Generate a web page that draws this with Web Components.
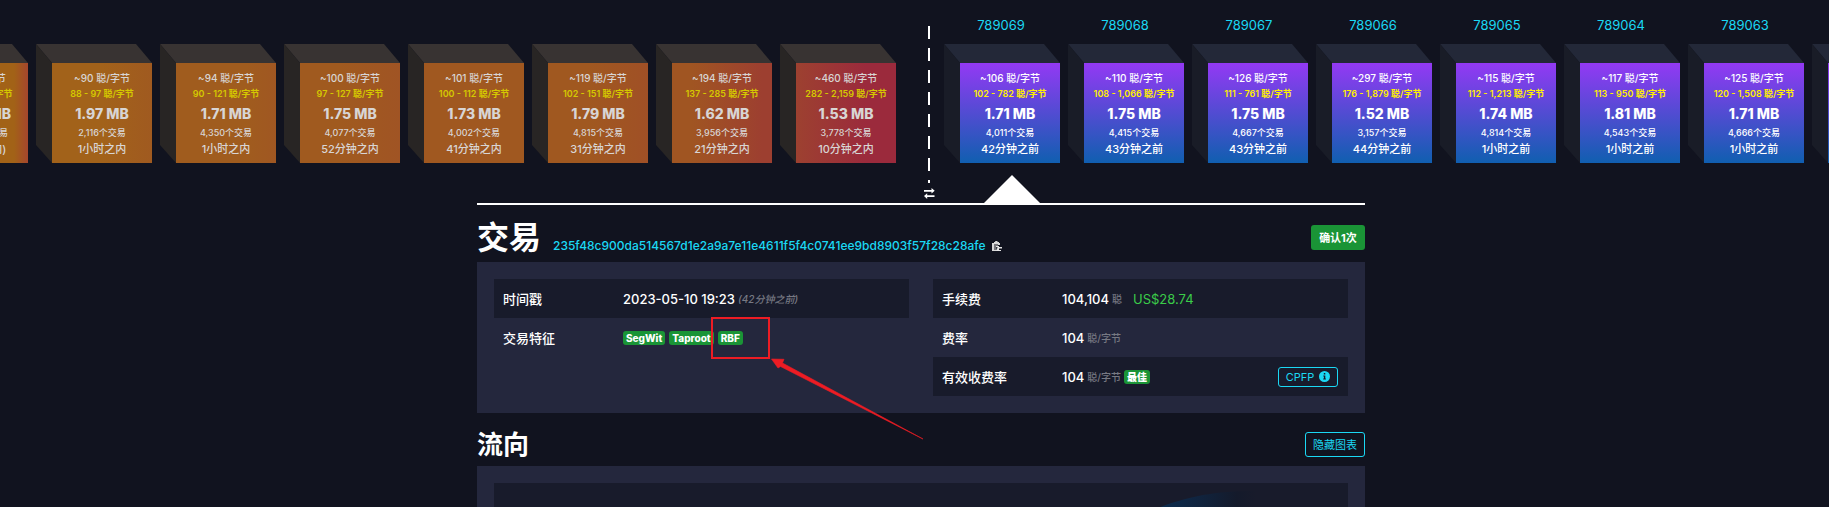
<!DOCTYPE html>
<html lang="zh-CN">
<head>
<meta charset="utf-8">
<title>交易 - mempool</title>
<style>
  html, body { margin: 0; background: #11131f; }
  body { color: #fff; font: 400 13px/20px Inter, "Noto Sans CJK SC", sans-serif; }
</style>
</head>
<body>
<mempool-page></mempool-page>

<template id="t-page">
  <style>
    :host { display: block; height: 100vh; overflow: hidden; }
    .strip { display: grid; grid-template-columns: minmax(0, 1fr) 48px minmax(0, 1fr); padding: 16px 0 0 11px; height: 203px; box-sizing: border-box; }
    .pending, .mined { display: flex; gap: 8px; }
    .pending { justify-content: flex-end; }
    main { padding-left: 13px; }
    .container { max-width: 888px; margin: 0 auto; border-top: 2px solid #fff; }
    header { display: flex; align-items: center; box-sizing: border-box; }
    header.tx { height: 57px; padding-top: 8px; }
    header.flow { height: 53px; padding-top: 10px; }
    h1, h2 { margin: 0; font-weight: 700; }
    h1 { font-size: 32px; line-height: 40px; }
    h2 { font-size: 26px; line-height: 32px; flex: 1; }
    .id { flex: 1; display: flex; align-items: center; gap: 6px; padding: 16px 0 0 12px; font-size: 12px; font-weight: 500; }
    a { color: #1bd8f4; text-decoration: none; }
    .copy { border: 0; padding: 0; background: none; display: flex; }
    .confirmed, .hide { box-sizing: border-box; height: 25px; border-radius: 3px; font: 700 11px/20px Inter, "Noto Sans CJK SC", sans-serif; padding: 0; }
    .confirmed { width: 54px; border: 0; background: #1a9436; color: #fff; }
    .hide { width: 60px; border: 1px solid #1bd8f4; background: none; color: #1bd8f4; font-weight: 400; }
    .columns { display: grid; grid-template-columns: 1fr 1fr; gap: 24px; align-items: start; }
    .chart { display: flex; justify-content: flex-end; background: #181b2b; min-height: 200px; padding: 8px 92px 0 0; box-sizing: border-box; }
    em, small { font-size: 10px; color: #777983; }
    .fiat { color: #3bcc49; margin-left: 8px; font-weight: 400; }
    .push { margin-left: auto; }
    .cpfp { display: flex; align-items: center; justify-content: center; gap: 5px; width: 60px; height: 20px; box-sizing: border-box; border: 1px solid #1bd8f4; border-radius: 3px; background: none; color: #1bd8f4; padding: 0; font: 400 11px/16px Inter, sans-serif; }
  </style>
  <div class="strip">
    <div class="pending"></div>
    <chain-divider></chain-divider>
    <div class="mined"></div>
  </div>
  <main>
    <div class="container">
      <header class="tx">
        <h1>交易</h1>
        <div class="id"><a href="#tx">235f48c900da514567d1e2a9a7e11e4611f5f4c0741ee9bd8903f57f28c28afe</a>
          <button class="copy" aria-label="复制"><svg width="10" height="10" viewBox="0 0 10 10"><path d="M0 2h2V1h1.200V0h2.300v1H7v1h1v2H6V3H2v6h3v1H0z" fill="#d9d9d9"/><path d="M2 3h4v2H4v4H2z" fill="#77777c"/><path d="M4 5h3v1h3v1.500H7V9h2v1H4.500V7.800L6 6.800 4 6z" fill="#e6e6e6"/></svg></button></div>
        <button class="confirmed">确认1次</button>
      </header>
      <info-card>
        <div class="columns">
          <data-rows>
            <data-row shade label="时间戳"><span>2023-05-10 19:23</span><em>(42分钟之前)</em></data-row>
            <data-row label="交易特征"><tag-badge>SegWit</tag-badge><tag-badge>Taproot</tag-badge><tag-badge>RBF</tag-badge></data-row>
          </data-rows>
          <data-rows>
            <data-row shade label="手续费"><span>104,104</span><small>聪</small><span class="fiat">US$28.74</span></data-row>
            <data-row label="费率"><span>104</span><small>聪/字节</small></data-row>
            <data-row shade label="有效收费率"><span>104</span><small>聪/字节</small><tag-badge>最佳</tag-badge><button class="cpfp push">CPFP <svg width="11" height="11" viewBox="0 0 11 11"><circle cx="5.500" cy="5.500" r="5.500" fill="#1bd8f4"/><path d="M4.800 2h1.500v1.400H4.800zM4.300 4.400h2v3.200h.6v1H4.200v-1h.7V5.400h-.6z" fill="#181b2b"/></svg></button></data-row>
          </data-rows>
        </div>
        <callout-arrow></callout-arrow>
      </info-card>
      <header class="flow">
        <h2>流向</h2>
        <button class="hide">隐藏图表</button>
      </header>
      <info-card>
        <div class="chart">
          <svg width="98" height="60" viewBox="0 0 98 60"><defs><linearGradient id="flow"><stop offset="0" stop-color="#0b2c4f"/><stop offset=".4" stop-color="#10243f"/><stop offset=".8" stop-color="#141a2b"/><stop offset="1" stop-color="#181b2b"/></linearGradient></defs><path d="M0 17C28 6 55 0 98 0V30C60 30 20 40 0 60z" fill="url(#flow)"/></svg>
        </div>
      </info-card>
    </div>
  </main>
</template>

<template id="t-block">
  <style>
    :host { display: block; flex: none; width: 116px; text-align: center; white-space: nowrap; }
    .height { display: block; height: 20px; line-height: 18px; margin-bottom: 8px; padding-right: 2px; font-size: 13px; color: #1bd8f4; text-decoration: none; }
    .cube { display: grid; grid-template: 19px 100px / 16px 100px; }
    .top { grid-area: 1 / 1 / 2 / 3; background: var(--top, #232838); clip-path: polygon(0 0, 100px 0, 100% 100%, 16px 100%); }
    .side { grid-area: 1 / 1 / 3 / 2; background: var(--side, #191c27); clip-path: polygon(0 0, 100% 19px, 100% 100%, 0 101px); }
    .face { display: flex; flex-direction: column; align-items: center; grid-area: 2 / 2; background: var(--face, linear-gradient(#9339f4, #105fb0)); color: var(--ink, #fff); padding-top: 7px; box-sizing: border-box; font-weight: 500; }
    .face div { line-height: 16px; }
    .face .fee { font-size: 10px; }
    .face .range { font-size: 9px; font-weight: 600; color: var(--range, #fff000); }
    .face .size { font-size: 14px; font-weight: 800; line-height: 24px; }
    .face .txs { font-size: 9px; line-height: 14px; }
    .face .time { font-size: 11px; line-height: 18px; }
    .marker { display: none; width: 56px; height: 28px; margin: 12px 0 0 40px; background: #fff; clip-path: polygon(50% 0, 100% 100%, 0 100%); }
    :host([current]) .marker { display: block; }
  </style>
  <a class="height" href="#block"></a>
  <div class="cube">
    <div class="top"></div><div class="side"></div>
    <div class="face"><div class="fee"></div><div class="range"></div><div class="size"></div><div class="txs"></div><div class="time"></div></div>
  </div>
  <div class="marker"></div>
</template>

<template id="t-divider">
  <style>
    :host { display: flex; flex-direction: column; align-items: center; padding: 10px 0 0 18px; }
    .line { width: 2px; height: 157px; background: repeating-linear-gradient(#fff 0 13px, transparent 13px 22px); }
    button { border: 0; padding: 0; margin-top: 5px; background: none; display: flex; }
  </style>
  <div class="line"></div>
  <button aria-label="切换方向"><svg width="11" height="11" viewBox="0 0 11 11"><path d="M0 2h7.500V0l3.200 2.800-3.200 2.800V3.800H0zM10.500 7.200H3.200V5.200L0 8.100l3.200 2.800V9h7.300z" fill="#fff"/></svg></button>
</template>

<script>
const base = (id, extra) => class extends HTMLElement {
  connectedCallback() {
    if (this.shadowRoot) return;
    this.attachShadow({ mode: 'open' }).append(document.getElementById(id).content.cloneNode(true));
    if (extra) extra(this, this.shadowRoot);
  }
};
const styled = html => class extends HTMLElement {
  connectedCallback() {
    if (this.shadowRoot) return;
    this.attachShadow({ mode: 'open' }).innerHTML = typeof html === 'function' ? html(this) : html;
  }
};

customElements.define('chain-divider', base('t-divider'));

customElements.define('chain-block', base('t-block', (host, root) => {
  const d = host.data;
  for (const k of ['fee', 'range', 'size', 'txs', 'time']) root.querySelector('.' + k).textContent = d[k];
  const link = root.querySelector('.height');
  if (d.height) link.textContent = d.height;
  else link.replaceWith(Object.assign(document.createElement('div'), { className: 'height' }));
}));

customElements.define('info-card', styled(`<style>
  :host { display: block; position: relative; background: #24273d; padding: 17px; }
</style><slot></slot>`));

customElements.define('data-rows', styled('<style>:host { display: block; }</style><slot></slot>'));

customElements.define('data-row', styled(el => `<style>
  :host { display: grid; grid-template-columns: 120px 1fr; align-items: center; height: 39px; padding: 0 10px 0 9px; font-weight: 500; }
  :host([shade]) { background: #181b2b; }
  .value { display: flex; align-items: center; gap: 3px; }
</style><div>${el.getAttribute('label')}</div><div class="value"><slot></slot></div>`));

customElements.define('tag-badge', styled(`<style>
  :host { display: block; background: #1a9436; border-radius: 3px; padding: 0 3px; margin-right: 1px; font-size: 10px; line-height: 14px; font-weight: 800; }
</style><slot></slot>`));

customElements.define('callout-arrow', styled(`<style>
  :host { position: absolute; left: 234px; top: 55px; pointer-events: none; }
  svg { display: block; overflow: visible; }
</style><svg width="212" height="123" viewBox="0 0 212 123">
  <rect x="1" y="1" width="57" height="40" fill="none" stroke="#ed1c24" stroke-width="2"/>
  <path d="M60.500 42 73 42.300 71.500 46 212 122 69.500 49.500 67 51z" fill="#ed1c24" stroke="#ed1c24" stroke-width=".6"/>
</svg>`));

const pending = [
  ['~86 聪/字节', '81 - 444 聪/字节', '64.97 MB', '142,310个交易', '(1小时之内)', '#a26217 0 86%, #a5462d'],
  ['~90 聪/字节', '88 - 97 聪/字节', '1.97 MB', '2,116个交易', '1小时之内', '#a2621a 50%, #a05a20'],
  ['~94 聪/字节', '90 - 121 聪/字节', '1.71 MB', '4,350个交易', '1小时之内', '#a05c1e, #a05c1e 70%, #a05722'],
  ['~100 聪/字节', '97 - 127 聪/字节', '1.75 MB', '4,077个交易', '52分钟之内', '#a05a1f 40%, #a05424'],
  ['~101 聪/字节', '100 - 112 聪/字节', '1.73 MB', '4,002个交易', '41分钟之内', '#a05820, #a05820'],
  ['~119 聪/字节', '102 - 151 聪/字节', '1.79 MB', '4,815个交易', '31分钟之内', '#a05820 40%, #a05026'],
  ['~194 聪/字节', '137 - 285 聪/字节', '1.62 MB', '3,956个交易', '21分钟之内', '#a05522 20%, #9d3f30 90%'],
  ['~460 聪/字节', '282 - 2,159 聪/字节', '1.53 MB', '3,778个交易', '10分钟之内', '#9d4130, #9b2a3c 70%'],
];
const mined = [
  ['~106 聪/字节', '102 - 782 聪/字节', '1.71 MB', '4,011个交易', '42分钟之前'],
  ['~110 聪/字节', '108 - 1,066 聪/字节', '1.75 MB', '4,415个交易', '43分钟之前'],
  ['~126 聪/字节', '111 - 761 聪/字节', '1.75 MB', '4,667个交易', '43分钟之前'],
  ['~297 聪/字节', '176 - 1,879 聪/字节', '1.52 MB', '3,157个交易', '44分钟之前'],
  ['~115 聪/字节', '112 - 1,213 聪/字节', '1.74 MB', '4,814个交易', '1小时之前'],
  ['~117 聪/字节', '113 - 950 聪/字节', '1.81 MB', '4,543个交易', '1小时之前'],
  ['~125 聪/字节', '120 - 1,508 聪/字节', '1.71 MB', '4,666个交易', '1小时之前'],
  ['', '', '', '', ''],
];

customElements.define('mempool-page', base('t-page', (host, root) => {
  const add = (sel, row, height, first) => {
    const [fee, range, size, txs, time, face] = row;
    const b = document.createElement('chain-block');
    b.data = { fee, range, size, txs, time, height };
    if (face) {
      b.style.setProperty('--face', `linear-gradient(90deg, ${face})`);
      b.style.setProperty('--top', '#383332');
      b.style.setProperty('--side', '#282524');
      b.style.setProperty('--ink', '#d8d5d4');
      b.style.setProperty('--range', '#d5c800');
    }
    if (first) b.setAttribute('current', '');
    root.querySelector(sel).append(b);
  };
  pending.forEach(r => add('.pending', r));
  mined.forEach((r, i) => add('.mined', r, r[0] && String(789069 - i), i === 0));
}));
</script>
</body>
</html>
